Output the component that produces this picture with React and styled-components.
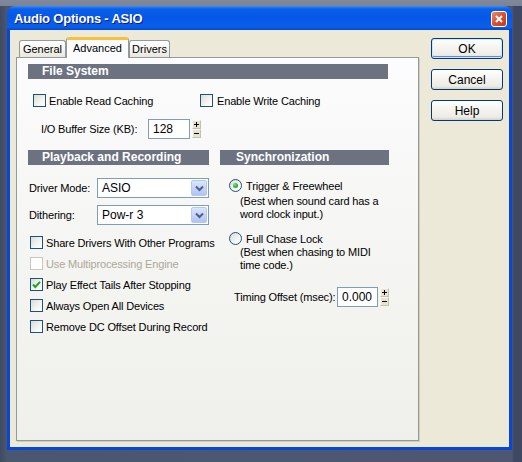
import React from 'react';
import styled, { createGlobalStyle } from 'styled-components';

const Global = createGlobalStyle`
  html, body { margin: 0; padding: 0; }
  body {
    width: 522px; height: 462px; overflow: hidden;
    font-family: "Liberation Sans", Arial, sans-serif;
    font-size: 11px; color: #000;
  }
`;

const Page = styled.div`
  box-sizing: border-box;
  width: 522px; height: 462px;
  padding: 6px 0 0 7px;
  background:
    linear-gradient(#80899c 0, #7b8497 6px, transparent 6px),
    linear-gradient(90deg, #3f4a63 0, #4b5670 7px, #4d5772 512px, #3e4862 514px);
  overflow: hidden;
`;

const Window = styled.div`
  width: 505px;
  display: flex; flex-direction: column;
`;

const TitleBar = styled.div`
  height: 24px;
  border-radius: 8px 8px 0 0;
  background: linear-gradient(#3a8bf5 0, #0a60ea 3px, #0558e6 45%, #0a5fea 88%, #0047d0 100%);
  display: flex; align-items: center; justify-content: space-between;
  padding: 0 5px 0 7px;
`;

const Title = styled.div`
  font-family: "Liberation Sans", Arial, sans-serif;
  font-weight: bold; font-size: 13px; letter-spacing: -0.2px;
  color: #fff;
  text-shadow: 1px 1px 0 #0a1a8a;
  padding-top: 1px;
`;

const CloseButton = styled.div`
  box-sizing: border-box;
  width: 16px; height: 16px;
  border: 1px solid #fff;
  border-radius: 3px;
  background: linear-gradient(135deg, #e98a6a 0%, #d8532d 50%, #c23a18 100%);
  display: flex; align-items: center; justify-content: center;
  margin-top: 2px;
`;

const Frame = styled.div`
  box-sizing: border-box;
  height: 420px;
  border: 3px solid #0846d8;
  border-top: none;
  background: #ece9d8;
  display: flex;
  padding: 7px 6px 0 6px;
  gap: 12px;
`;

const TabControl = styled.div`
  width: 403px;
  display: flex; flex-direction: column;
`;

const TabStrip = styled.div`
  height: 20px;
  display: flex; align-items: flex-start;
  padding-left: 3px;
`;

const Tab = styled.div`
  box-sizing: border-box;
  width: ${p => p.$w}px;
  height: ${p => (p.$active ? 21 : 17)}px;
  margin-top: ${p => (p.$active ? 0 : 3)}px;
  border: 1px solid #919b9c;
  border-bottom: none;
  ${p => p.$active && 'border-top: 3px solid #f9c03e;'}
  border-radius: 3px 3px 0 0;
  background: ${p => (p.$active ? '#fcfcfe' : 'linear-gradient(#ffffff, #f3f2ee 60%, #e8e6dc)')};
  display: flex; align-items: center; justify-content: center;
  padding-bottom: ${p => (p.$active ? 2 : 0)}px;
  position: relative; z-index: ${p => (p.$active ? 2 : 1)};
`;

const TabPanel = styled.div`
  box-sizing: border-box;
  height: 384px;
  border: 1px solid #919b9c;
  box-shadow: 1px 1px 0 #d0cdbf;
  background: linear-gradient(#fcfcfe 0%, #f6f6f4 40%, #efefeb 100%);
  padding: 6px 30px 0 11px;
  display: flex; flex-direction: column;
`;

const SectionBar = styled.div`
  height: 15px;
  background: #6d7281;
  color: #fff;
  font-weight: bold; font-size: 12px;
  line-height: 15px;
  padding-left: ${p => p.$indent || 14}px;
`;

const Row = styled.div`
  display: flex; align-items: center;
  margin-top: ${p => p.$mt || 0}px;
  margin-left: ${p => p.$ml || 0}px;
  height: ${p => p.$h || 13}px;
`;

const CheckLabel = styled.label`
  display: flex; align-items: center;
  gap: ${p => p.$gap ?? 3}px;
  width: ${p => (p.$w ? p.$w + 'px' : 'auto')};
  height: 13px;
  color: ${p => (p.$disabled ? '#aca899' : '#000')};
  white-space: nowrap;
  letter-spacing: -0.15px;
`;

const Box = styled.span`
  box-sizing: border-box;
  width: 13px; height: 13px; flex: none;
  border: 1px solid ${p => (p.$disabled ? '#cac8bb' : '#1c5180')};
  background: ${p => (p.$disabled ? '#fff' : 'linear-gradient(135deg, #dcdcd7 0%, #f4f4f0 60%, #ffffff 100%)')};
  display: flex; align-items: center; justify-content: center;
`;

const Radio = styled.span`
  box-sizing: border-box;
  width: 13px; height: 13px; flex: none;
  border: 1px solid #1c5180;
  border-radius: 50%;
  background: linear-gradient(135deg, #dcdcd7 0%, #f4f4f0 60%, #ffffff 100%);
  display: flex; align-items: center; justify-content: center;
`;

const RadioDot = styled.span`
  width: 5px; height: 5px; border-radius: 50%;
  background: radial-gradient(circle at 35% 35%, #7ee07e, #21a121 70%);
`;

const FieldLabel = styled.span`
  width: ${p => p.$w}px;
  flex: none;
  white-space: nowrap;
  letter-spacing: -0.15px;
`;

const TextBox = styled.div`
  box-sizing: border-box;
  width: ${p => p.$w}px; height: 20px;
  border: 1px solid #7f9db9;
  background: #fff;
  display: flex; align-items: center;
  padding-left: 4px;
  font-size: 12px;
`;

const Spinner = styled.div`
  display: flex; flex-direction: column;
  margin-left: 2px;
`;

const SpinBtn = styled.div`
  box-sizing: border-box;
  width: 9px; height: 9px;
  border: 1px solid #c4c1b2;
  border-top-color: #f8f7f2;
  border-left-color: #f8f7f2;
  background: #e6e3d3;
  display: flex; align-items: center; justify-content: center;
`;

const Columns = styled.div`
  display: flex; gap: 11px;
  margin-top: 11px;
`;

const Column = styled.div`
  width: ${p => p.$w}px;
  display: flex; flex-direction: column;
`;

const Select = styled.div`
  box-sizing: border-box;
  width: 113px; height: 20px;
  border: 1px solid #7f9db9;
  background: #fff;
  display: flex; align-items: center; justify-content: space-between;
  padding: 1px;
  font-size: 12px;
`;

const SelectText = styled.span`
  padding-left: 3px;
`;

const DropBtn = styled.span`
  box-sizing: border-box;
  width: 16px; height: 16px;
  border: 1px solid #b5c8f4;
  border-radius: 2px;
  background: linear-gradient(#dbe5fc, #c1d2f8 60%, #b0c4f2);
  display: flex; align-items: center; justify-content: center;
`;

const CheckList = styled.div`
  display: flex; flex-direction: column;
  gap: 8px;
  margin-top: 11px;
  margin-left: 2px;
`;

const Desc = styled.div`
  margin-left: 20px;
  margin-top: ${p => p.$mt}px;
  line-height: 13px;
  letter-spacing: -0.15px;
`;

const ButtonColumn = styled.div`
  display: flex; flex-direction: column;
  gap: 10px;
  padding-top: 1px;
`;

const Button = styled.div`
  box-sizing: border-box;
  width: 72px; height: 21px;
  border: 1px solid #003c74;
  border-radius: 3px;
  background: linear-gradient(#ffffff 0%, #f4f3ee 50%, #ecebe6 85%, #d6d0c5 100%);
  ${p => p.$default && 'box-shadow: inset 0 0 0 1px #cee7ff, inset 0 -1px 0 1px #6982ee;'}
  display: flex; align-items: center; justify-content: center;
  font-size: 12px;
`;

const Check = () => (
  <svg width="9" height="9" viewBox="0 0 9 9">
    <path d="M1 4.5 L3.3 7 L8 1.8" stroke="#21a121" strokeWidth="2" fill="none" />
  </svg>
);

const Plus = () => (
  <svg width="5" height="5" viewBox="0 0 5 5">
    <path d="M0 2.5 H5 M2.5 0 V5" stroke="#000" strokeWidth="1" />
  </svg>
);

const Minus = () => (
  <svg width="5" height="5" viewBox="0 0 5 5">
    <path d="M0 2.5 H5" stroke="#000" strokeWidth="1" />
  </svg>
);

const Chevron = () => (
  <svg width="9" height="7" viewBox="0 0 9 7">
    <path d="M1 1.5 L4.5 5 L8 1.5" stroke="#4d6185" strokeWidth="2" fill="none" />
  </svg>
);

const CloseX = () => (
  <svg width="8" height="8" viewBox="0 0 8 8">
    <path d="M1 1 L7 7 M7 1 L1 7" stroke="#fff" strokeWidth="2" />
  </svg>
);

const CheckBox = ({ label, checked, disabled, w, gap }) => (
  <CheckLabel $disabled={disabled} $w={w} $gap={gap}>
    <Box $disabled={disabled}>{checked && <Check />}</Box>
    {label}
  </CheckLabel>
);

const SpinBox = () => (
  <Spinner>
    <SpinBtn><Plus /></SpinBtn>
    <SpinBtn><Minus /></SpinBtn>
  </Spinner>
);

const tabs = [
  { name: 'General', w: 47 },
  { name: 'Advanced', w: 63, active: true },
  { name: 'Drivers', w: 41 },
];

const options = [
  { label: 'Share Drivers With Other Programs' },
  { label: 'Use Multiprocessing Engine', disabled: true },
  { label: 'Play Effect Tails After Stopping', checked: true },
  { label: 'Always Open All Devices' },
  { label: 'Remove DC Offset During Record' },
];

export default function App() {
  return (
    <Page>
      <Global />
      <Window>
        <TitleBar>
          <Title>Audio Options - ASIO</Title>
          <CloseButton><CloseX /></CloseButton>
        </TitleBar>
        <Frame>
          <TabControl>
            <TabStrip>
              {tabs.map(t => (
                <Tab key={t.name} $w={t.w} $active={t.active}>{t.name}</Tab>
              ))}
            </TabStrip>
            <TabPanel>
              <SectionBar>File System</SectionBar>
              <Row $mt={15} $ml={5}>
                <CheckBox label="Enable Read Caching" w={167} gap={3} />
                <CheckBox label="Enable Write Caching" gap={4} />
              </Row>
              <Row $mt={12} $ml={13} $h={20}>
                <FieldLabel $w={107}>I/O Buffer Size (KB):</FieldLabel>
                <TextBox $w={42}>128</TextBox>
                <SpinBox />
              </Row>
              <Columns>
                <Column $w={181}>
                  <SectionBar>Playback and Recording</SectionBar>
                  <Row $mt={13} $ml={1} $h={20}>
                    <FieldLabel $w={68}>Driver Mode:</FieldLabel>
                    <Select><SelectText>ASIO</SelectText><DropBtn><Chevron /></DropBtn></Select>
                  </Row>
                  <Row $mt={7} $ml={1} $h={20}>
                    <FieldLabel $w={68}>Dithering:</FieldLabel>
                    <Select><SelectText>Pow-r 3</SelectText><DropBtn><Chevron /></DropBtn></Select>
                  </Row>
                  <CheckList>
                    {options.map(o => (
                      <CheckBox key={o.label} label={o.label} checked={o.checked} disabled={o.disabled} />
                    ))}
                  </CheckList>
                </Column>
                <Column $w={169}>
                  <SectionBar $indent={16}>Synchronization</SectionBar>
                  <Row $mt={14} $ml={9}>
                    <CheckLabel $gap={4}>
                      <Radio><RadioDot /></Radio>
                      Trigger &amp; Freewheel
                    </CheckLabel>
                  </Row>
                  <Desc $mt={3}>(Best when sound card has a<br />word clock input.)</Desc>
                  <Row $mt={11} $ml={9}>
                    <CheckLabel $gap={4}>
                      <Radio />
                      Full Chase Lock
                    </CheckLabel>
                  </Row>
                  <Desc $mt={1}>(Best when chasing to MIDI<br />time code.)</Desc>
                  <Row $mt={15} $ml={14} $h={20}>
                    <FieldLabel $w={103}>Timing Offset (msec):</FieldLabel>
                    <TextBox $w={51}>0.000</TextBox>
                    <SpinBox />
                  </Row>
                </Column>
              </Columns>
            </TabPanel>
          </TabControl>
          <ButtonColumn>
            <Button $default>OK</Button>
            <Button>Cancel</Button>
            <Button>Help</Button>
          </ButtonColumn>
        </Frame>
      </Window>
    </Page>
  );
}
